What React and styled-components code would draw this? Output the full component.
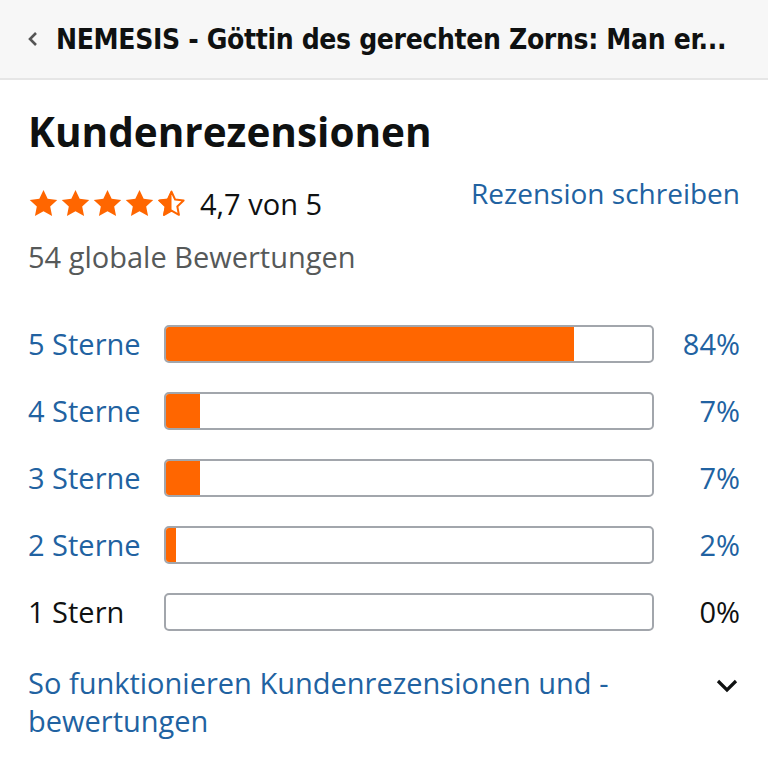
import React from 'react'
import styled, { createGlobalStyle } from 'styled-components';

const GlobalStyle = createGlobalStyle`
    body {
        margin: 0;
        background: #ffffff;
        font-family: "Open Sans", "Liberation Sans", sans-serif;
        color: #0f1111;
    }
`;

const Header = styled.div`
    height: 78px;
    background-color: #f7f7f7;
    border-bottom: 2px solid #e6e6e6;
    display: flex;
    align-items: center;
    padding: 0 20px 0 26px;
    gap: 16px;
    box-sizing: content-box;
`;

const HeaderTitle = styled.div`
    font-family: "DejaVu Sans Condensed", "Liberation Sans Narrow", "Liberation Sans", sans-serif;
    font-weight: 700;
    font-size: 28px;
    letter-spacing: -0.35px;
    color: #0f1111;
    white-space: nowrap;
`;

const Content = styled.div`
    padding: 22px 28px 0 28px;
`;

const Heading = styled.h1`
    margin: 0;
    font-size: 40.5px;
    font-weight: 700;
    line-height: 60px;
    color: #0f1111;
`;

const SummaryRow = styled.div`
    display: flex;
    justify-content: space-between;
    align-items: flex-start;
    margin-top: 12px;
`;

const Stars = styled.div`
    display: flex;
    align-items: center;
    gap: 13px;
    font-size: 29px;
    padding-top: 10px;
`;

const StarGroup = styled.div`
    display: flex;
    gap: 1px;
`;

const Link = styled.a`
    color: #2162a1;
    text-decoration: none;
    font-size: ${props => props.size || "29px"};
`;

const Global = styled.div`
    margin-top: 14px;
    font-size: 29px;
    color: #565959;
`;

const Histogram = styled.div`
    margin-top: 48px;
    display: flex;
    flex-direction: column;
    gap: 28px;
`;

const Row = styled.div`
    display: grid;
    grid-template-columns: 136px 1fr 86px;
    align-items: center;
    height: 39px;
    font-size: 29px;
    color: ${props => props.link ? "#2162a1" : "#0f1111"};
`;

const Bar = styled.div`
    height: 34px;
    border: 2px solid #a2a6ac;
    border-radius: 5px;
    overflow: hidden;
    background: #ffffff;
`;

const Fill = styled.div`
    height: 100%;
    background: #ff6600;
`;

const Percent = styled.div`
    text-align: right;
`;

const Footer = styled.div`
    margin-top: 33px;
    display: flex;
    justify-content: space-between;
    align-items: flex-start;
    line-height: 38px;
`;

const Chevron = styled.svg`
    margin-top: 12px;
    flex-shrink: 0;
`;

const StarIcon = ({ fill }) => (
    <svg width="31" height="29" viewBox="0 0 24 23">
        <defs>
            <clipPath id="half">
                <rect x="0" y="0" width="12" height="23" />
            </clipPath>
        </defs>
        {fill === 'full' && (
            <path d="M12 0.8l3.3 7 7.6 0.9-5.6 5.2 1.5 7.6L12 17.7l-6.8 3.8 1.5-7.6L1.1 8.7l7.6-0.9z" fill="#ff6600" />
        )}
        {fill === 'half' && (
            <>
                <path d="M12 2.2l2.9 6.2 6.7 0.8-5 4.6 1.3 6.7L12 17.1l-5.9 3.4 1.3-6.7-5-4.6 6.7-0.8z" fill="none" stroke="#ff6600" strokeWidth="1.6" strokeLinejoin="round" />
                <path d="M12 0.8l3.3 7 7.6 0.9-5.6 5.2 1.5 7.6L12 17.7l-6.8 3.8 1.5-7.6L1.1 8.7l7.6-0.9z" fill="#ff6600" clipPath="url(#half)" />
            </>
        )}
    </svg>
);

const rows = [
    { label: "5 Sterne", pct: 84, link: true },
    { label: "4 Sterne", pct: 7, link: true },
    { label: "3 Sterne", pct: 7, link: true },
    { label: "2 Sterne", pct: 2, link: true },
    { label: "1 Stern", pct: 0, link: false },
];

function App() {
    return (
        <>
            <GlobalStyle />
            <Header>
                <svg width="14" height="18" viewBox="0 0 14 18">
                    <path d="M10 3L4 9l6 6" fill="none" stroke="#555" strokeWidth="2.6" />
                </svg>
                <HeaderTitle>NEMESIS - Göttin des gerechten Zorns: Man er...</HeaderTitle>
            </Header>
            <Content>
                <Heading>Kundenrezensionen</Heading>
                <SummaryRow>
                    <Stars>
                        <StarGroup>
                            <StarIcon fill="full" />
                            <StarIcon fill="full" />
                            <StarIcon fill="full" />
                            <StarIcon fill="full" />
                            <StarIcon fill="half" />
                        </StarGroup>
                        <span>4,7 von 5</span>
                    </Stars>
                    <Link size="28px">Rezension schreiben</Link>
                </SummaryRow>
                <Global>54 globale Bewertungen</Global>
                <Histogram>
                    {rows.map(r => (
                        <Row key={r.label} link={r.link}>
                            <span>{r.label}</span>
                            <Bar><Fill style={{ width: r.pct + '%' }} /></Bar>
                            <Percent>{r.pct}%</Percent>
                        </Row>
                    ))}
                </Histogram>
                <Footer>
                    <Link>So funktionieren Kundenrezensionen und -<br />bewertungen</Link>
                    <Chevron width="26" height="20" viewBox="0 0 26 20">
                        <path d="M4 5l9 9 9-9" fill="none" stroke="#0f1111" strokeWidth="3.2" />
                    </Chevron>
                </Footer>
            </Content>
        </>
    )
}

export default App
